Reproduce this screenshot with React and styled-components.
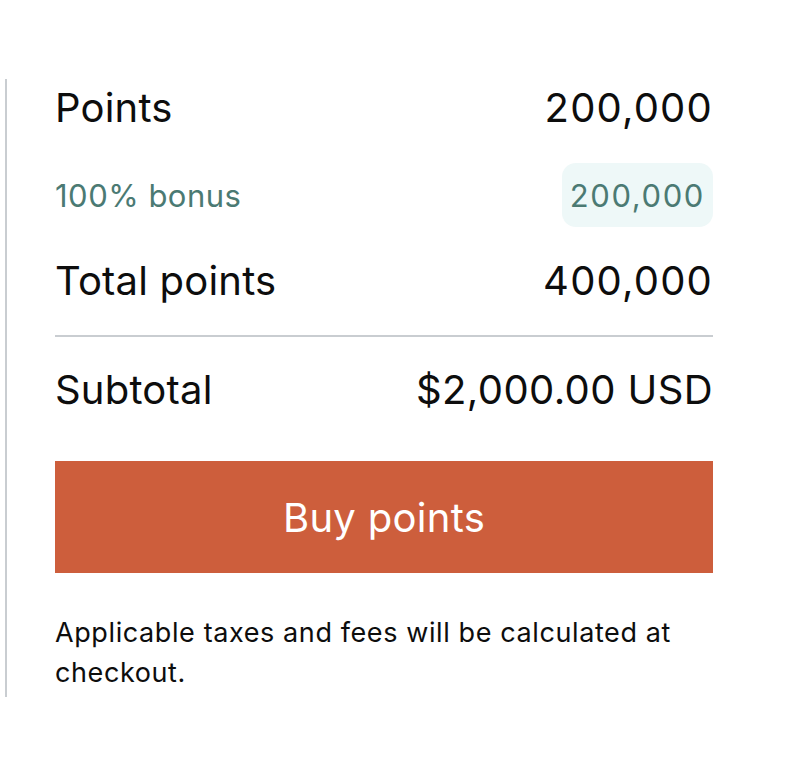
import React from "react";
import styled, { createGlobalStyle } from "styled-components";

const Global = createGlobalStyle`
  html, body { margin: 0; padding: 0; background: #fff; }
  body { font-family: Inter, "Liberation Sans", sans-serif; color: #0d0d0d; }
`;

const Panel = styled.section`
  margin: 79px 0 0 5px;
  width: 708px;
  border-left: 2px solid #c9cdd1;
  padding: 0 0 4px 48px;
  box-sizing: border-box;
  display: flex;
  flex-direction: column;
`;

const Content = styled.div`
  width: 658px;
  display: flex;
  flex-direction: column;
`;

const Row = styled.div`
  display: flex;
  justify-content: space-between;
  align-items: center;
  height: ${(p) => p.$h || 56}px;
  margin-top: ${(p) => p.$mt || 0}px;
  font-size: ${(p) => (p.$small ? 31 : 40)}px;
  letter-spacing: ${(p) => (p.$small ? 0.5 : 0.2)}px;
  color: ${(p) => (p.$accent ? "#4b7a73" : "#0d0d0d")};
`;

const Num = styled.span`
  letter-spacing: ${(p) => (p.$wide ? 1.2 : 0.4)}px;
`;

const Pill = styled.span`
  display: inline-flex;
  align-items: center;
  height: 64px;
  padding: 0 8px;
  border-radius: 14px;
  background: #eef8f8;
  letter-spacing: 1.6px;
`;

const Divider = styled.hr`
  border: 0;
  height: 2px;
  background: #c9cdd1;
  margin: 27px 0 0;
`;

const BuyButton = styled.button`
  margin-top: 44px;
  height: 112px;
  width: 100%;
  border: 0;
  background: #cd5e3c;
  color: #fff;
  font-family: inherit;
  font-size: 40px;
  letter-spacing: 0.3px;
  cursor: pointer;
`;

const Note = styled.p`
  margin: 40px 0 0;
  font-size: 27px;
  line-height: 40px;
  letter-spacing: 0.6px;
  color: #0d0d0d;
`;

export default function App() {
  return (
    <>
      <Global />
      <Panel>
        <Content>
          <Row>
            <span>Points</span>
            <Num $wide>200,000</Num>
          </Row>
          <Row $h={64} $mt={28} $small $accent>
            <span>100% bonus</span>
            <Pill>200,000</Pill>
          </Row>
          <Row $mt={25}>
            <span>Total points</span>
            <Num $wide>400,000</Num>
          </Row>
          <Divider />
          <Row $mt={24}>
            <span>Subtotal</span>
            <Num>$2,000.00 USD</Num>
          </Row>
          <BuyButton>Buy points</BuyButton>
          <Note>Applicable taxes and fees will be calculated at checkout.</Note>
        </Content>
      </Panel>
    </>
  );
}
